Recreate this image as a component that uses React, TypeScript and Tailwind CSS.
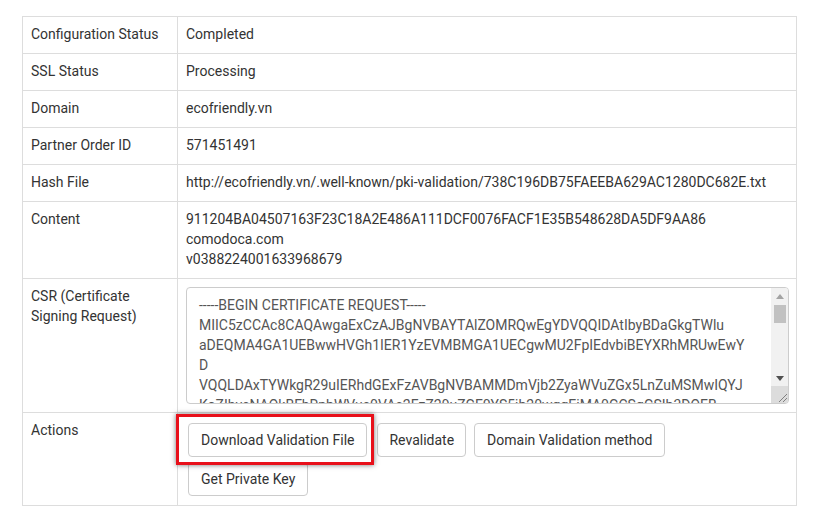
import React from "react";

const csr = `-----BEGIN CERTIFICATE REQUEST-----
MIIC5zCCAc8CAQAwgaExCzAJBgNVBAYTAlZOMRQwEgYDVQQIDAtIbyBDaGkgTWlu
aDEQMA4GA1UEBwwHVGh1IER1YzEVMBMGA1UECgwMU2FpIEdvbiBEYXRhMRUwEwY
D
VQQLDAxTYWkgR29uIERhdGExFzAVBgNVBAMMDmVjb2ZyaWVuZGx5LnZuMSMwIQYJ
KoZIhvcNAQkBFhRpbWVuc0VAc2FzZ29uZGF0YS5jb20wggEiMA0GCSqGSIb3DQEB
AQUAA4IBDwAwggEKAoIBAQC7vXk3mL9pQw2nR8sT4uY6zA1bC3dE5fG7hJ9kL0mN
-----END CERTIFICATE REQUEST-----`;

function Btn({ children, className = "" }: { children: React.ReactNode; className?: string }) {
  return (
    <button
      type="button"
      className={
        "h-[34px] border border-[#ccc] rounded-[4px] bg-white text-[14px] leading-[20px] text-[#333] whitespace-nowrap " +
        className
      }
    >
      {children}
    </button>
  );
}

function FakeScrollbar() {
  return (
    <div className="absolute top-[1px] right-[1px] bottom-[1px] w-[17px] flex flex-col pointer-events-none rounded-tr-[3px] rounded-br-[3px] overflow-hidden">
      <div className="flex-1 bg-[#f1f1f1] flex flex-col items-center">
        <div className="h-[15px] w-full flex items-center justify-center pt-[2px]">
          <svg width="8" height="5" viewBox="0 0 8 5">
            <polygon points="4,0 8,5 0,5" fill="#a3a3a3" />
          </svg>
        </div>
        <div className="mt-[2px] h-[18px] w-[12px] bg-[#c1c1c1]" />
        <div className="flex-1" />
        <div className="h-[16px] w-full flex items-center justify-center">
          <svg width="8" height="5" viewBox="0 0 8 5">
            <polygon points="0,0 8,0 4,5" fill="#505050" />
          </svg>
        </div>
      </div>
      <div className="h-[17px] bg-[#dcdcdc] flex items-end justify-end">
        <svg width="12" height="12" viewBox="0 0 12 12">
          <line x1="11" y1="3" x2="3" y2="11" stroke="#808080" strokeWidth="1" />
          <line x1="11" y1="7" x2="7" y2="11" stroke="#808080" strokeWidth="1" />
        </svg>
      </div>
    </div>
  );
}

export default function App() {
  const rows: [string, React.ReactNode][] = [
    ["Configuration Status", "Completed"],
    ["SSL Status", "Processing"],
    ["Domain", "ecofriendly.vn"],
    ["Partner Order ID", "571451491"],
    [
      "Hash File",
      "http://ecofriendly.vn/.well-known/pki-validation/738C196DB75FAEEBA629AC1280DC682E.txt",
    ],
    [
      "Content",
      <>
        911204BA04507163F23C18A2E486A111DCF0076FACF1E35B548628DA5DF9AA86
        <br />
        comodoca.com
        <br />
        v0388224001633968679
      </>,
    ],
  ];
  return (
    <div
      className="min-h-[517px] w-[813px] bg-white pt-[16px] pl-[22px] text-[14px] leading-[20px] text-[#333]"
      style={{ fontFamily: "Roboto, 'Liberation Sans', sans-serif" }}
    >
      <table className="table-fixed w-[775px] border-collapse border border-[#ddd]">
        <colgroup>
          <col className="w-[155px]" />
          <col />
        </colgroup>
        <tbody>
          {rows.map(([k, v]) => (
            <tr key={k}>
              <td className="border border-[#ddd] pt-[7px] pb-[9px] px-[8px] align-top">{k}</td>
              <td className="border border-[#ddd] pt-[7px] pb-[9px] px-[8px] align-top">{v}</td>
            </tr>
          ))}
          <tr>
            <td className="border border-[#ddd] pt-[7px] pb-[9px] px-[8px] align-top">CSR (Certificate Signing Request)</td>
            <td className="border border-[#ddd] p-[8px] align-top">
              <div className="relative w-[603px] h-[117px]">
                <textarea
                  readOnly
                  defaultValue={csr}
                  className="block w-[603px] h-[117px] border border-[#ccc] rounded-[4px] pl-[12px] pr-[29px] pt-[7px] pb-[4px] text-[14px] leading-[20px] text-[#555] bg-white overflow-hidden resize-none outline-none"
                  style={{ fontFamily: "Roboto, 'Liberation Sans', sans-serif" }}
                />
                <FakeScrollbar />
              </div>
            </td>
          </tr>
          <tr>
            <td className="border border-[#ddd] pt-[7px] pb-[9px] px-[8px] align-top">Actions</td>
            <td className="border border-[#ddd] px-[10px] pt-[10px] pb-[9px] align-top">
              <div className="flex flex-wrap">
                <span className="relative mr-[10px]">
                  <Btn className="px-[12px]">Download Validation File</Btn>
                  <span className="absolute -left-[12px] -right-[7px] -top-[9px] -bottom-[8px] border-[3px] border-[#e8101a] shadow-[0_0_5px_rgba(0,0,0,0.55)] pointer-events-none" />
                </span>
                <Btn className="px-[11px] mr-[8px]">Revalidate</Btn>
                <Btn className="px-[12px]">Domain Validation method</Btn>
                <div className="basis-full h-0" />
                <Btn className="px-[12px] mt-[5px] h-[33px]">Get Private Key</Btn>
              </div>
            </td>
          </tr>
        </tbody>
      </table>
    </div>
  );
}
